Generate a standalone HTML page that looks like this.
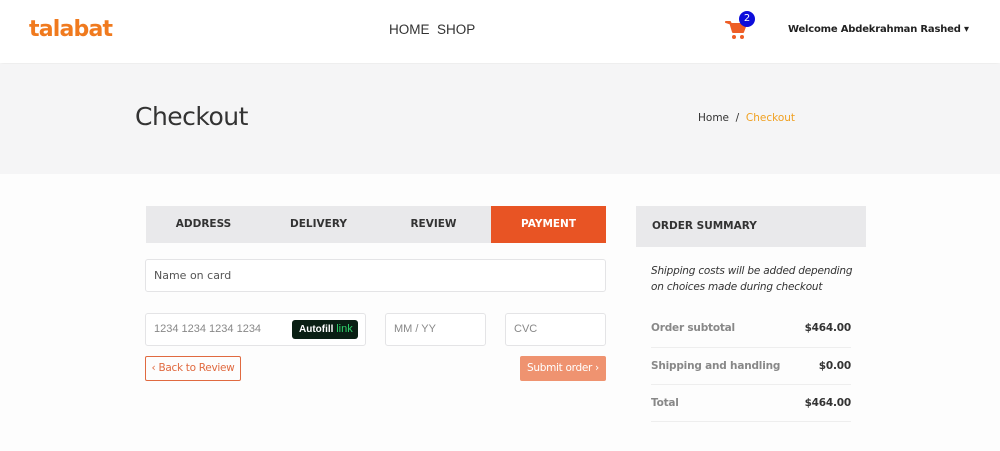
<!DOCTYPE html>
<html><head><meta charset="utf-8"><style>
*{box-sizing:border-box;margin:0;padding:0}
body{width:1000px;height:451px;overflow:hidden;background:#fdfdfd;font-family:"DejaVu Sans","Liberation Sans",sans-serif;color:#333;position:relative}
.abs{position:absolute}
header{position:absolute;left:0;top:0;width:1000px;height:63px;background:#fff;box-shadow:0 2px 4px rgba(0,0,0,.08)}
.hero{position:absolute;left:0;top:64px;width:1000px;height:110px;background:#f5f5f6}
.tabs{left:146px;top:206px;width:460px;height:37px;background:#e9e9eb;display:flex}
.tabs div{flex:1;text-align:center;line-height:37px;font-size:10.5px;font-weight:bold;color:#333}
.tabs .on{background:#e85424;color:#fff}
.inp{border:1px solid #e4e4e6;background:#fff;border-radius:3px;font-size:11px;color:#888;padding-left:8px;font-family:"Liberation Sans",sans-serif}
.row{position:absolute;left:651px;width:200px;font-size:10.5px;font-weight:bold;color:#888;border-bottom:1px solid #eee;letter-spacing:-0.2px}
.row span{position:absolute;right:0;color:#333}
</style></head><body>
<header>
<div class="abs" style="left:29px;top:17px;font:bold 22px 'DejaVu Sans',sans-serif;color:#f07a1e;letter-spacing:-0.8px">talabat</div>
<div class="abs" style="left:389px;top:22px;font-size:13.5px;color:#333;font-family:'Liberation Sans',sans-serif">HOME &nbsp;SHOP</div>
<svg class="abs" style="left:725px;top:20px" width="22" height="20" viewBox="0 0 22 20"><path d="M1 2h4l3 10h10l3-8H7z" fill="#ee5e26" stroke="#ee5e26" stroke-width="2" stroke-linejoin="round"/><circle cx="9" cy="17" r="2" fill="#ee5e26"/><circle cx="17" cy="17" r="2" fill="#ee5e26"/></svg>
<div class="abs" style="left:739px;top:11px;width:16px;height:16px;border-radius:50%;background:#0d0ddb;color:#fff;font-size:10px;text-align:center;line-height:16px">2</div>
<div class="abs" style="left:788px;top:24px;font-size:10px;font-weight:bold;color:#222;letter-spacing:-0.2px">Welcome Abdekrahman Rashed ▾</div>
</header>
<div class="hero">
<div class="abs" style="left:135px;top:38px;font-size:25px;color:#333;letter-spacing:-0.5px">Checkout</div>
<div class="abs" style="left:698px;top:48px;font-size:10.5px;color:#333">Home &nbsp;/&nbsp; <span style="color:#f0a020">Checkout</span></div>
</div>
<div class="abs tabs"><div>ADDRESS</div><div>DELIVERY</div><div>REVIEW</div><div class="on">PAYMENT</div></div>
<div class="abs inp" style="left:145px;top:259px;width:461px;height:33px;line-height:31px;color:#555;font-family:'DejaVu Sans',sans-serif">Name on card</div>
<div class="abs inp" style="left:145px;top:313px;width:221px;height:33px;line-height:31px">1234 1234 1234 1234</div>
<div class="abs" style="left:292px;top:320px;width:66px;height:19px;background:#0a1f14;border-radius:3px;color:#fff;font:bold 10px 'Liberation Sans',sans-serif;line-height:19px;padding-left:7px">Autofill <span style="color:#2ed06a;font-weight:normal;font-size:11px">link</span></div>
<div class="abs inp" style="left:385px;top:313px;width:101px;height:33px;line-height:31px">MM / YY</div>
<div class="abs inp" style="left:505px;top:313px;width:101px;height:33px;line-height:31px">CVC</div>
<div class="abs" style="left:145px;top:356px;width:96px;height:25px;border:1px solid #e06a40;border-radius:2px;color:#e06a40;font-size:10.5px;line-height:23px;text-align:center;letter-spacing:-0.3px">‹ Back to Review</div>
<div class="abs" style="left:520px;top:356px;width:86px;height:25px;background:#ef9370;border-radius:2px;color:#fff;font-size:10.5px;line-height:25px;text-align:center;letter-spacing:-0.3px">Submit order ›</div>
<div class="abs" style="left:636px;top:206px;width:230px;height:41px;background:#e9e9eb;font-size:10.5px;font-weight:bold;line-height:41px;padding-left:16px;color:#333">ORDER SUMMARY</div>
<div class="abs" style="left:651px;top:263px;width:215px;font-size:10.5px;font-style:italic;line-height:16px;color:#333;letter-spacing:-0.2px">Shipping costs will be added depending on choices made during checkout</div>
<div class="row" style="top:310px;height:38px;line-height:36px">Order subtotal<span>$464.00</span></div>
<div class="row" style="top:348px;height:37px;line-height:36px">Shipping and handling<span>$0.00</span></div>
<div class="row" style="top:385px;height:37px;line-height:36px">Total<span>$464.00</span></div>
</body></html>
